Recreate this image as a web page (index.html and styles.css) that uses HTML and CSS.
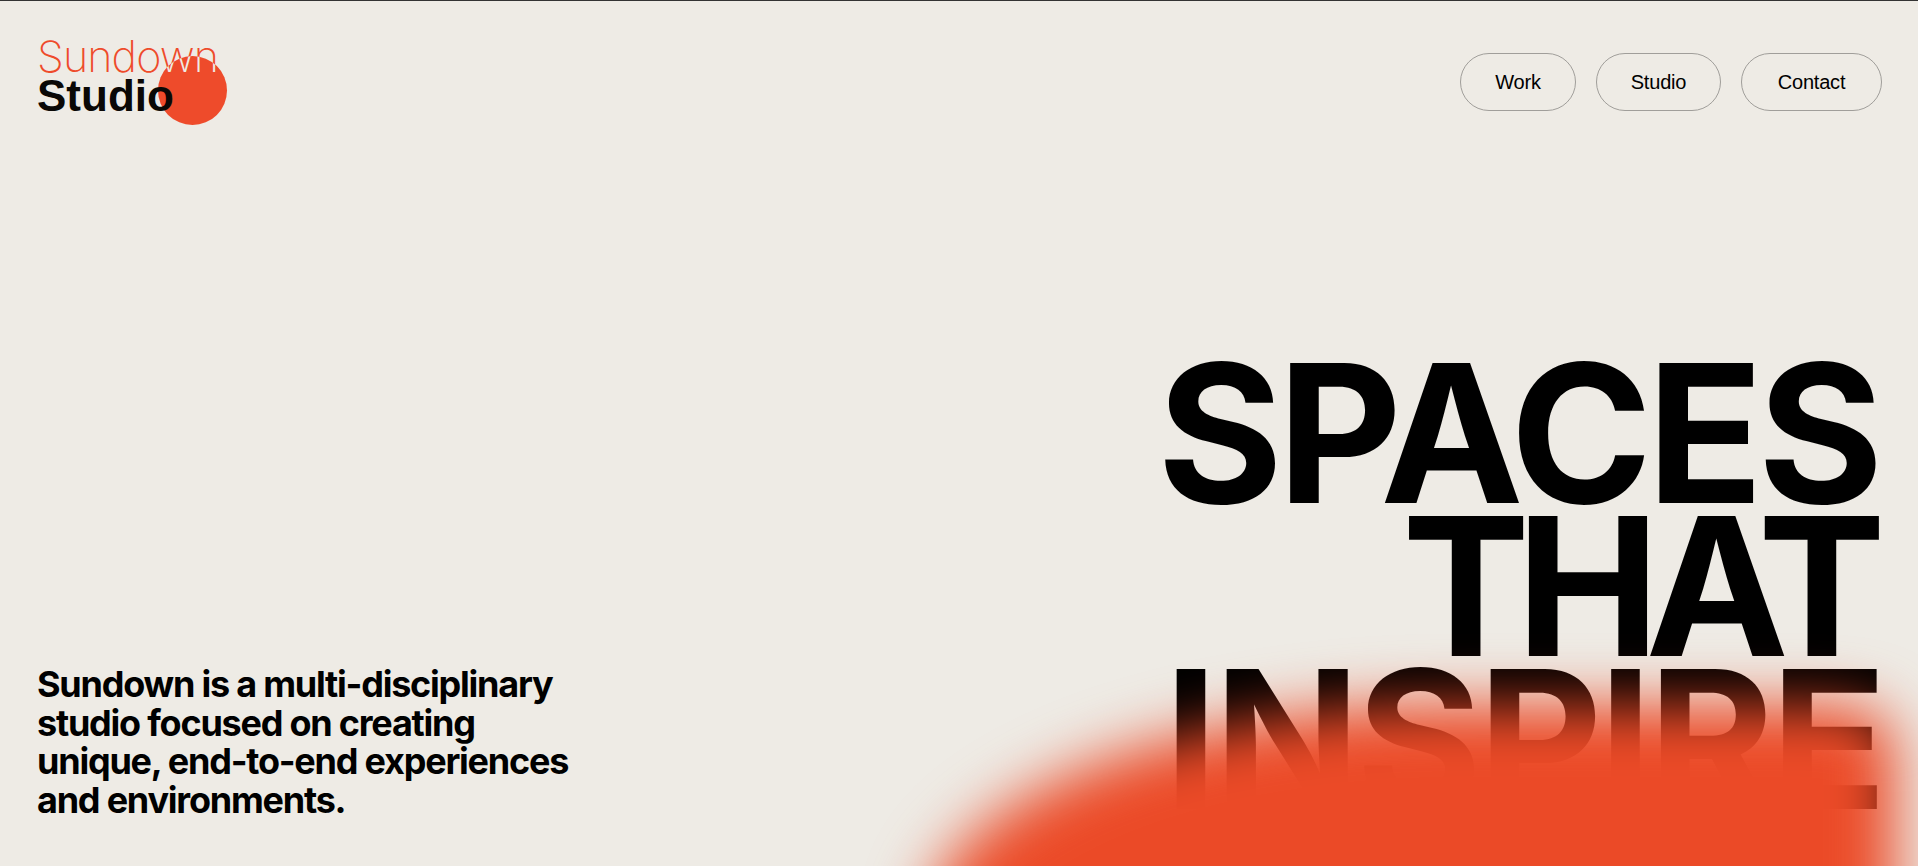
FILE: index.html
```html
<!DOCTYPE html>
<html lang="en">
<head>
    <meta charset="UTF-8">
    <meta name="viewport" content="width=device-width, initial-scale=1.0">
    <title>Sundown Studio</title>
    <link rel="stylesheet" href="styles.css">
</head>
<body>
    <div class="page">
        <header class="top">
            <a class="logo" href="#">
                <span class="logo-light">Sundown</span>
                <span class="logo-sun"><span class="logo-cut">Sundown</span></span>
                <span class="logo-bold">Studio</span>
            </a>
            <nav class="menu">
                <a href="#">Work</a>
                <a href="#">Studio</a>
                <a href="#">Contact</a>
            </nav>
        </header>

        <main class="hero">
            <p class="intro">Sundown is a multi-disciplinary studio focused on creating unique, end-to-end experiences and environments.</p>
            <h1 class="headline">
                <span class="line-one">SPACES</span>
                <span class="line-two">THAT</span>
                <span class="line-three">INSPIRE</span>
            </h1>
        </main>

        <div class="glow"></div>
    </div>
</body>
</html>
```

FILE: styles.css
```css
* {
    box-sizing: border-box;
}

html, body {
    margin: 0;
    height: 100%;
}

body {
    font-family: "Liberation Sans", Arial, sans-serif;
    background-color: #eeebe5;
    color: #000;
    overflow: hidden;
}

a {
    color: inherit;
    text-decoration: none;
}

.page {
    position: relative;
    height: 866px;
    overflow: hidden;
    border-top: 1px solid #333;
    display: flex;
    flex-direction: column;
}

.top {
    display: flex;
    justify-content: space-between;
    align-items: flex-start;
    padding: 35px 36px 0 37px;
}

.logo {
    position: relative;
    display: flex;
    flex-direction: column;
    font-size: 43px;
    line-height: 40px;
}

.logo-light {
    font-family: Inter, "Liberation Sans", sans-serif;
    font-weight: 200;
    letter-spacing: -0.02em;
    color: #ee4b2b;
}

.logo-bold {
    position: relative;
    font-weight: 700;
    font-size: 44px;
    color: #0a0806;
}

/* circle sits over "Sundown", the copy inside flips the letters to the page colour */
.logo-sun {
    position: absolute;
    left: 121px;
    top: 20px;
    width: 69px;
    height: 69px;
    border-radius: 50%;
    background-color: #ee4b2b;
    overflow: hidden;
}

.logo-cut {
    position: absolute;
    left: -121px;
    top: -20px;
    font-family: Inter, "Liberation Sans", sans-serif;
    font-weight: 200;
    letter-spacing: -0.02em;
    color: #eeebe5;
    white-space: nowrap;
}

.menu {
    display: flex;
    gap: 20px;
    padding-top: 17px;
}

.menu a {
    height: 58px;
    display: flex;
    align-items: center;
    justify-content: center;
    border: 1px solid #a09e9a;
    border-radius: 29px;
    font-size: 20px;
    letter-spacing: -0.01em;
}

.menu a:nth-child(1) {
    width: 116px;
}

.menu a:nth-child(2) {
    width: 125px;
}

.menu a:nth-child(3) {
    width: 141px;
}

.hero {
    flex: 1;
    display: flex;
    justify-content: space-between;
    align-items: flex-end;
    padding: 0 40px 0 37px;
}

.intro {
    width: 550px;
    margin: 0 0 47px 0;
    font-family: Inter, "Liberation Sans", sans-serif;
    font-size: 36px;
    line-height: 38.5px;
    font-weight: 700;
    letter-spacing: -0.034em;
}

.headline {
    margin: 0 0 50px 0;
    text-align: right;
    font-family: Inter, "Liberation Sans", sans-serif;
    font-size: 192px;
    line-height: 153px;
    font-weight: 700;
}

.headline span {
    display: block;
}

.line-one {
    letter-spacing: -5.5px;
}

.line-two {
    letter-spacing: -14px;
    margin-right: 6px;
}

.line-three {
    letter-spacing: -4px;
    margin-right: -5px;
}

.glow {
    position: absolute;
    left: 925px;
    top: 704px;
    width: 970px;
    height: 300px;
    background-color: #eb4a27;
    border-radius: 530px 60px 0 0 / 225px 40px 0 0;
    filter: blur(30px);
}
```
